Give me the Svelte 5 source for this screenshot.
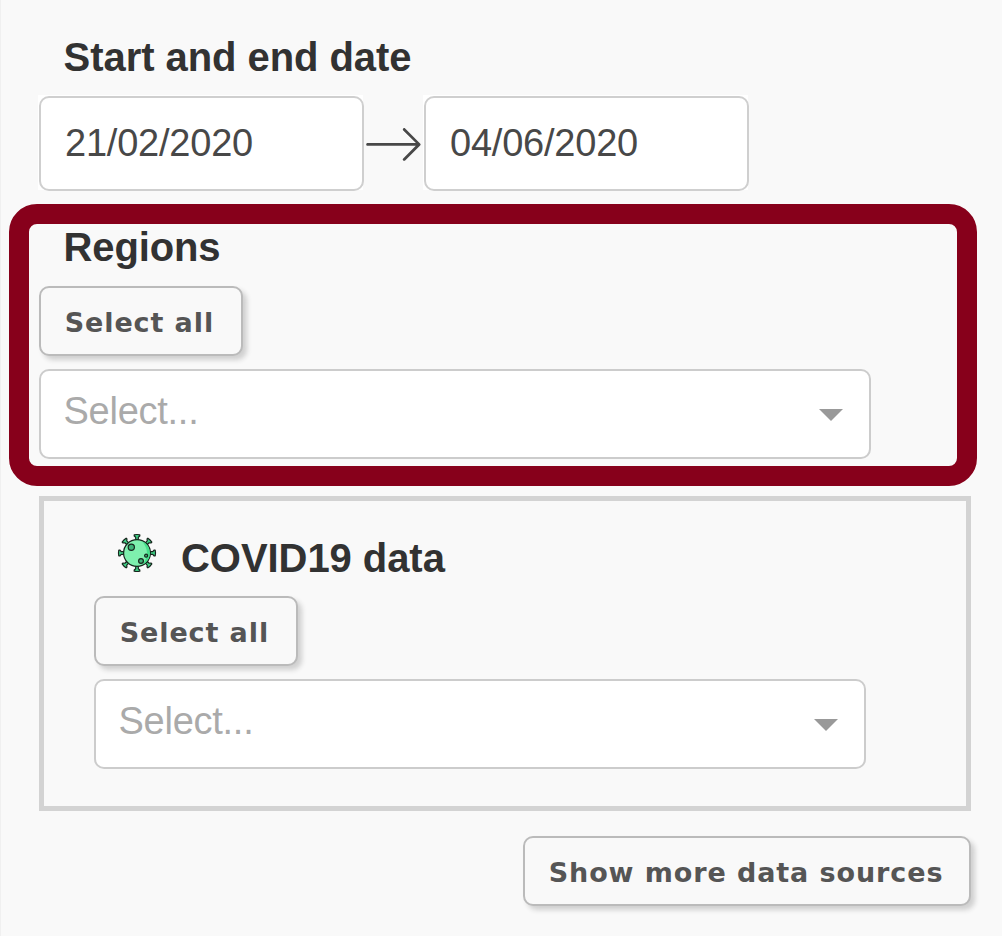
<script>
  let startDate = $state('21/02/2020');
  let endDate = $state('04/06/2020');
  const spikes = [0, 45, 90, 135, 180, 225, 270, 315];
</script>

{#snippet dropdown()}
  <div class="select">
    <span>Select...</span>
    <svg class="caret" viewBox="0 0 24 12"><path d="M0 0H24L12 12Z" /></svg>
  </div>
{/snippet}

<main>
  <h2>Start and end date</h2>
  <div class="dates">
    <div class="date"><div class="field">{startDate}</div></div>
    <svg class="arrow" viewBox="0 0 1000 1000">
      <path d="M694 242l249 250c12 11 12 21 1 32L694 773c-5 5-10 7-16 7s-11-2-16-7c-11-11-11-21 0-32l210-210H68c-13 0-23-10-23-23s10-23 23-23h806L662 275c-21-22 11-54 32-33z" />
    </svg>
    <div class="date"><div class="field">{endDate}</div></div>
  </div>

  <section class="regions">
    <h2>Regions</h2>
    <button>Select all</button>
    {@render dropdown()}
  </section>

  <section class="source">
    <div class="title">
      <svg class="virus" viewBox="-20 -20 40 40">
        {#each spikes as angle}
          <path
            class="spike"
            transform="rotate({angle})"
            d="M-1.3 -13V-15.8L-2.8 -17V-18.2Q0 -18.8 2.8 -18.2V-17L1.3 -15.8V-13Z"
          />
        {/each}
        <circle class="body" r="13.4" />
        <path class="shade" d="M5 -11.8A12.8 12.8 0 0 1 5 11.8Q15 0 5 -11.8Z" />
        <circle class="spot" cx="-5.7" cy="-5.7" r="3.1" />
        <circle class="spot" cx="4" cy="8" r="2.4" />
        <circle class="spot" cx="9.1" cy="2.7" r="1.5" />
      </svg>
      <h2>COVID19 data</h2>
    </div>
    <button>Select all</button>
    {@render dropdown()}
  </section>

  <button class="more">Show more data sources</button>
</main>

<style>
  :global(body) {
    margin: 0;
    background: #f9f9f9;
  }
  main {
    box-sizing: border-box;
    height: 936px;
    padding: 34px 31px 0 38px;
    border-left: 1px solid #f0f0f0;
    background: #f9f9f9;
    font-family: "Liberation Sans", Arial, sans-serif;
    display: flex;
    flex-direction: column;
  }
  h2 {
    margin: 0 0 0 24.6px;
    font-size: 40px;
    line-height: 46px;
    font-weight: 700;
    letter-spacing: -0.06px;
    color: #323232;
    white-space: nowrap;
  }
  .dates {
    display: flex;
    margin: 15px 0 0 -1px;
    height: 95px;
  }
  .date {
    box-sizing: border-box;
    width: 325px;
    height: 95px;
    padding: 1px 0 0 1px;
    background: #fff;
  }
  .field {
    box-sizing: border-box;
    width: 325px;
    height: 95px;
    padding: 0 24px;
    border: 2px solid #cfcfcf;
    border-radius: 10px;
    background: #fff;
    font-size: 38px;
    line-height: 90px;
    letter-spacing: -0.22px;
    color: #484848;
  }
  .arrow {
    width: 60px;
    height: 60px;
    margin-top: 19px;
    transform: translateX(0.5px);
    fill: #484848;
  }
  .regions {
    box-sizing: border-box;
    width: 968px;
    height: 282px;
    margin: 14px 0 0 -30px;
    padding: 0 10px;
    border: 20px solid #87001b;
    border-radius: 28px;
  }
  .regions h2 {
    letter-spacing: -0.15px;
  }
  button {
    display: block;
    box-sizing: border-box;
    width: 204px;
    height: 70px;
    margin: 16px 0 13px;
    padding: 3px 0 0 23.7px;
    border: 2px solid #bbb;
    border-radius: 10px;
    background: #f9f9f9;
    box-shadow: 4px 4px 5px #d0d0d0;
    font: 700 27px/64px "DejaVu Sans", Verdana, sans-serif;
    letter-spacing: 0.9px;
    text-align: left;
    white-space: nowrap;
    color: #555;
  }
  .select {
    box-sizing: border-box;
    display: flex;
    align-items: center;
    justify-content: space-between;
    width: 832px;
    height: 90px;
    padding: 0 26px 0 22.5px;
    border: 2px solid #ccc;
    border-radius: 10px;
    background: #fff;
    font-size: 38px;
    line-height: 44px;
    letter-spacing: -0.26px;
    color: #aaa;
  }
  .select span {
    padding-bottom: 6px;
  }
  .caret {
    width: 24px;
    height: 12px;
    margin-top: 2px;
    fill: #999;
  }
  .source {
    box-sizing: border-box;
    width: 932px;
    height: 315px;
    margin-top: 10px;
    padding: 34px 50px 0;
    border: 5px solid #d3d3d3;
  }
  .source button {
    margin-top: 15px;
  }
  .source .select {
    width: 772px;
  }
  .title {
    display: flex;
  }
  .title h2 {
    margin-left: 24px;
  }
  .virus {
    width: 40px;
    height: 40px;
    margin: -2px 0 0 23px;
  }
  .spike {
    fill: #3fd487;
    stroke: #17251d;
    stroke-width: 1.2;
    stroke-linejoin: round;
  }
  .body {
    fill: #7ef0ae;
    stroke: #17251d;
    stroke-width: 1.2;
  }
  .shade {
    fill: #45e08b;
  }
  .spot {
    fill: #3eb378;
    stroke: #17251d;
    stroke-width: 1.2;
  }
  .more {
    width: 448px;
    margin: 25px 0 0;
    align-self: flex-end;
  }
</style>
